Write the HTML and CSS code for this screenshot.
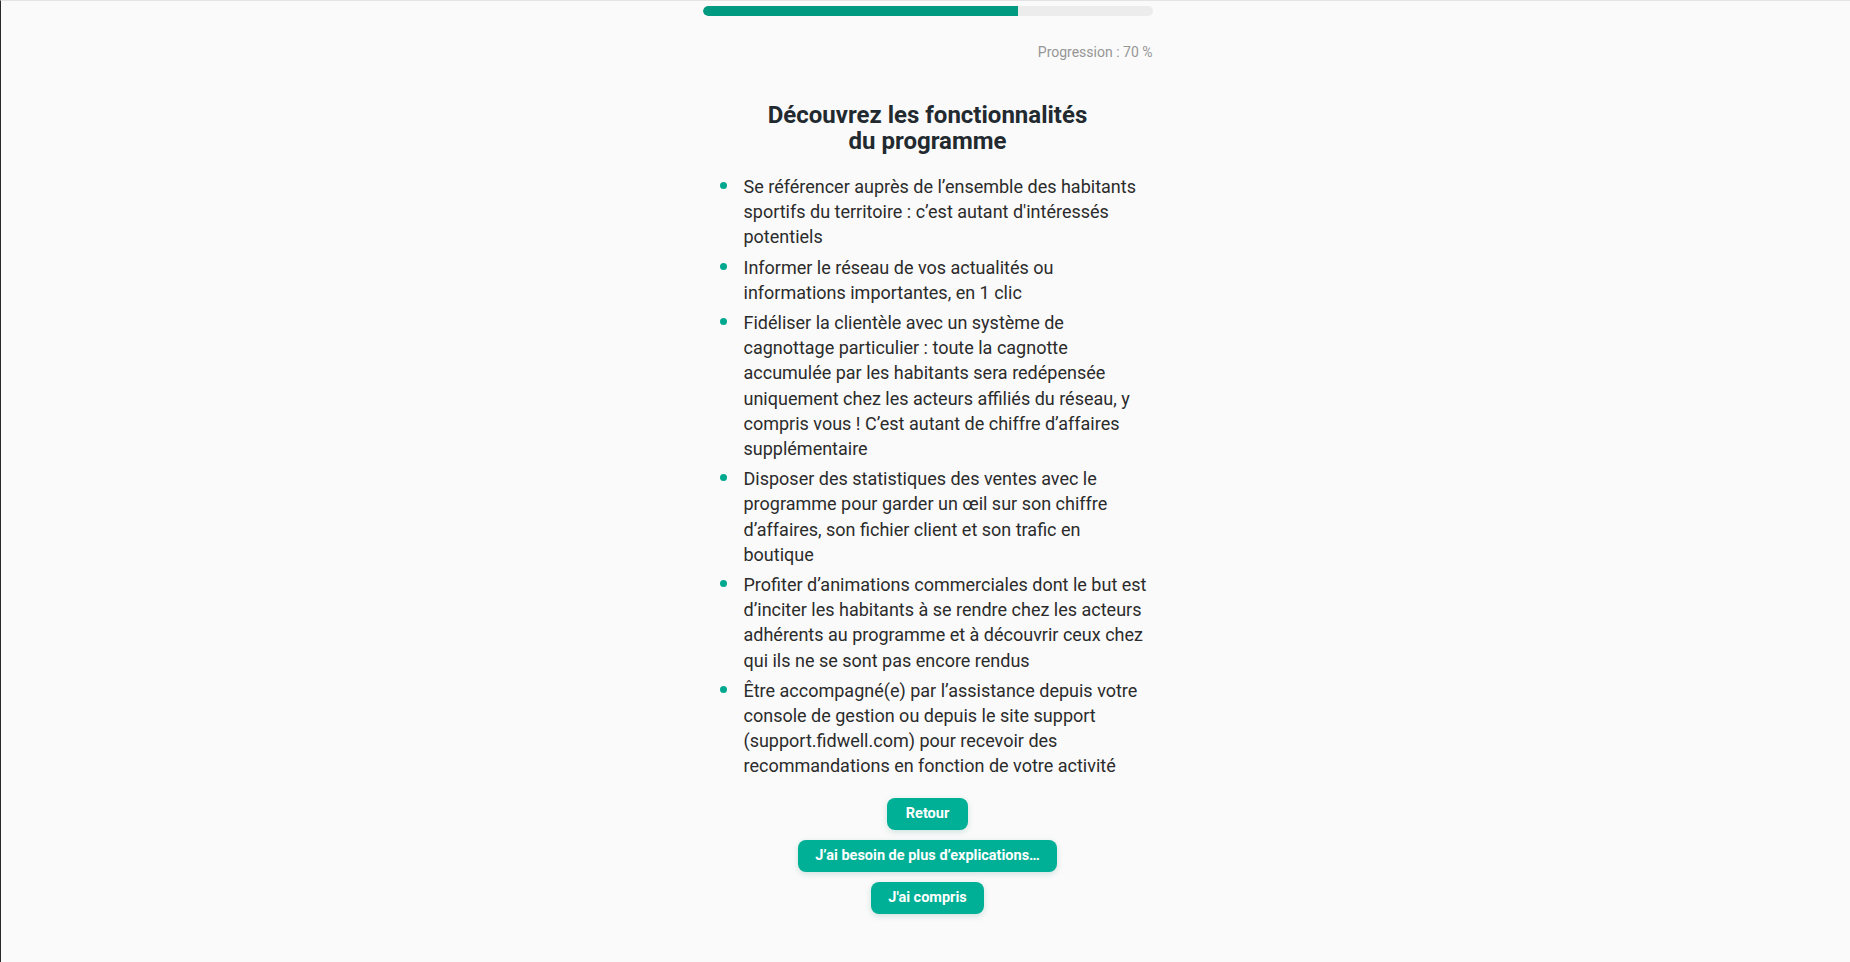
FILE: index.html
```html
<!DOCTYPE html>
<html lang="fr">
<head>
<meta charset="utf-8">
<title>Découvrez les fonctionnalités du programme</title>
<link rel="stylesheet" href="styles.css">
</head>
<body>
<main class="page">
  <div class="progress"><div class="progress-fill" style="width:70%"></div></div>
  <p class="progress-label">Progression : 70 %</p>
  <h1 class="title">Découvrez les fonctionnalités<br>du programme</h1>
  <ul class="features">
    <li><span>Se référencer auprès de l’ensemble des habitants sportifs du territoire : c’est autant d'intéressés potentiels</span></li>
    <li><span>Informer le réseau de vos actualités ou informations importantes, en 1 clic</span></li>
    <li><span>Fidéliser la clientèle avec un système de cagnottage particulier : toute la cagnotte accumulée par les habitants sera redépensée uniquement chez les acteurs affiliés du réseau, y compris vous ! C’est autant de chiffre d’affaires supplémentaire</span></li>
    <li><span>Disposer des statistiques des ventes avec le programme pour garder un œil sur son chiffre d’affaires, son fichier client et son trafic en boutique</span></li>
    <li><span>Profiter d’animations commerciales dont le but est d’inciter les habitants à se rendre chez les acteurs adhérents au programme et à découvrir ceux chez qui ils ne se sont pas encore rendus</span></li>
    <li><span>Être accompagné(e) par l’assistance depuis votre console de gestion ou depuis le site support (support.fidwell.com) pour recevoir des recommandations en fonction de votre activité</span></li>
  </ul>
  <div class="actions">
    <button class="btn btn-back" type="button">Retour</button>
    <button class="btn" type="button">J’ai besoin de plus d’explications…</button>
    <button class="btn" type="button">J'ai compris</button>
  </div>
</main>
</body>
</html>
```
FILE: styles.css
```css
html {
  background: #fafafa;
}
body {
  margin: 0;
  min-height: 961px;
  border-top: 1px solid #e4e4e4;
  border-left: 1px solid #2a2a2a;
  background: #fafafa;
  font-family: Roboto, "Liberation Sans", sans-serif;
  color: #2b2b2b;
}
.page {
  width: 450px;
  margin: 0 auto;
  padding-top: 5px;
  display: flex;
  flex-direction: column;
  position: relative;
  left: 2px;
}
.progress {
  height: 10px;
  border-radius: 5px;
  background: #ececec;
  overflow: hidden;
}
.progress-fill {
  height: 100%;
  background: #009a80;
  border-radius: 5px 0 0 5px;
}
.progress-label {
  margin: 26px 0 0;
  text-align: right;
  font-size: 14px;
  line-height: 20px;
  color: #969696;
}
.title {
  margin: 40px 0 0;
  text-align: center;
  font-size: 24px;
  line-height: 26px;
  font-weight: 700;
  color: #222a30;
}
.features {
  margin: 20px 0 0;
  padding: 0 0 0 17px;
  list-style: none;
  font-size: 18px;
  line-height: 25.2px;
  color: #2b2b2b;
}
.features li {
  display: flex;
  gap: 17px;
  margin-bottom: 5px;
}
.features li::before {
  content: "";
  flex: 0 0 7px;
  width: 7px;
  height: 7px;
  margin-top: 8px;
  border-radius: 50%;
  background: #00a88f;
}
.actions {
  margin-top: 14px;
  display: flex;
  flex-direction: column;
  align-items: center;
  gap: 10px;
}
.btn {
  height: 32px;
  padding: 0 17px;
  border: none;
  border-radius: 8px;
  background: #00b096;
  color: #fff;
  font-family: Roboto, "Liberation Sans", sans-serif;
  font-size: 14.5px;
  font-weight: 700;
  box-shadow: 0 2px 6px rgba(0, 120, 100, 0.18);
  cursor: pointer;
}
.btn-back {
  padding: 0 19px;
}
```
